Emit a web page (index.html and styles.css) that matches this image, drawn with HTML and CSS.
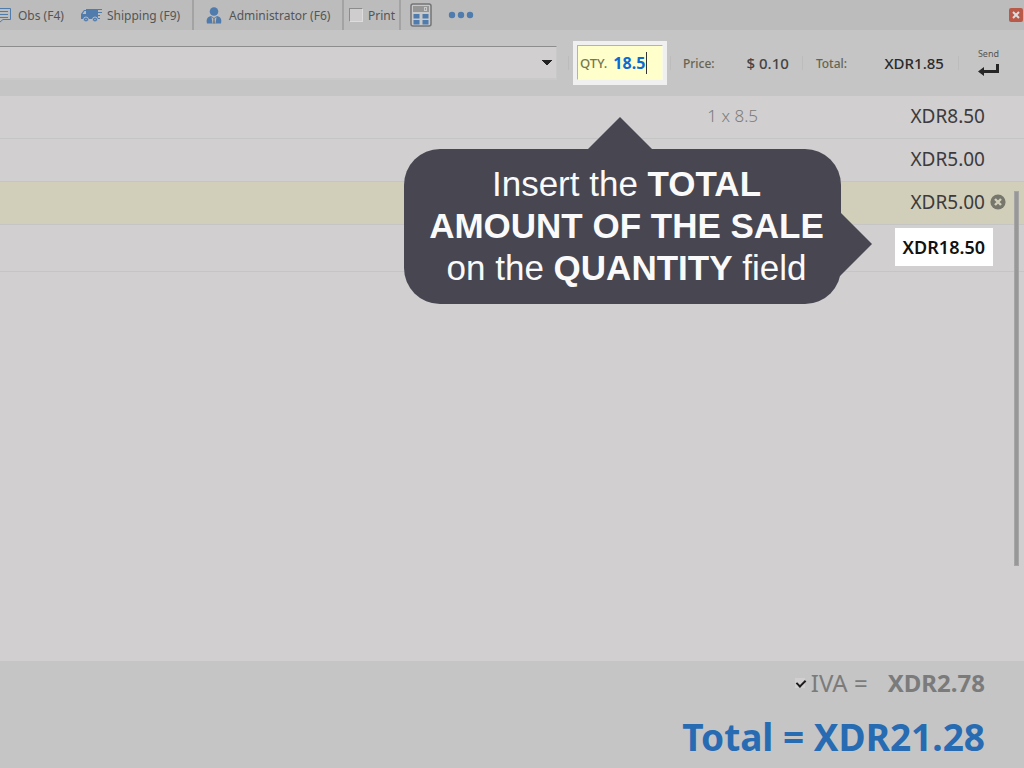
FILE: index.html
```
<!DOCTYPE html>
<html lang="en">
<head>
    <meta charset="UTF-8">
    <meta name="viewport" content="width=device-width, initial-scale=1.0">
    <title>Point of sale</title>
    <link rel="stylesheet" href="styles.css">
</head>
<body>
    <header class="toolbar">
        <button class="tool tool-obs">
            <svg width="12" height="16" viewBox="0 0 12 16" fill="none" stroke="#4f7bad"><path d="M0 1.5h10.5v11H3L0 15M0 4.5h8M0 7.5h8M0 10.5h8"/></svg>
            Obs (F4)
        </button>
        <button class="tool tool-shipping">
            <svg width="21" height="16" viewBox="0 0 21 16" fill="#4f7bad">
                <path d="M5 2h12v9H0V7l3-4h2z"/>
                <path d="M17 2h4v1h-4zM17 5h4v1h-4zM17 8h2v1h-2zM0 11h19v1H0z"/>
                <path d="M1.500 7l2-3H5v3z" fill="#bcbcbc"/>
                <circle cx="5" cy="12.500" r="2.500" stroke="#bcbcbc"/><circle cx="14" cy="12.500" r="2.500" stroke="#bcbcbc"/>
                <circle cx="5" cy="12.500" r=".7" fill="#bcbcbc"/><circle cx="14" cy="12.500" r=".7" fill="#bcbcbc"/>
            </svg>
            Shipping (F9)
        </button>
        <button class="tool tool-user">
            <svg width="16" height="17" viewBox="0 0 16 17" fill="#4f7bad">
                <circle cx="8" cy="4.500" r="4.300"/>
                <path d="M1 16.500c-1-4 0-6.500 4-7.500L8 11l3-2c4 1 5 3.500 4 7.500z"/>
                <path d="M5.500 10l1 6.500h3l1-6.500L8 12z" fill="#bcbcbc"/><path d="M7.500 11h1l.5 5.500H7z" fill="#777"/>
            </svg>
            Administrator (F6)
        </button>
        <label class="tool tool-print"><input type="checkbox" class="print-check">Print</label>
        <button class="tool tool-calc" aria-label="Calculator">
            <svg width="22" height="24" viewBox="0 0 22 24">
                <rect x="1" y="1" width="20" height="22" rx="2" fill="#c8c8c8" stroke="#747474" stroke-width="1.500"/>
                <path d="M3 3h16v6H3z" fill="#969696"/><rect x="14.500" y="4.500" width="2" height="3" fill="none" stroke="#c8c8c8"/>
                <path d="M3.500 11h6v4.500h-6zM12.500 11h6v4.500h-6zM3.500 17h6v4.500h-6zM12.500 17h6v4.500h-6z" fill="#4f7bad"/>
            </svg>
        </button>
        <button class="tool tool-more" aria-label="More">
            <svg width="26" height="8" viewBox="0 0 26 8" fill="#4f7bad"><circle cx="4" cy="4" r="3.200"/><circle cx="13" cy="4" r="3.200"/><circle cx="22" cy="4" r="3.200"/></svg>
        </button>
        <button class="close" aria-label="Close">
            <svg width="8" height="8" viewBox="0 0 8 8" stroke="#ddd" stroke-width="2"><path d="M1 1l6 6M7 1L1 7"/></svg>
        </button>
    </header>

    <section class="entry">
        <select class="product" aria-label="Product"><option></option></select>
        <i class="sep"></i>
        <div class="qty">
            <div class="qty-inner">
                <label for="qty">QTY.</label>
                <div class="qty-value"><input id="qty" type="text" value="18.5"></div>
            </div>
        </div>
        <i class="sep"></i>
        <div class="amount amount-price"><span>Price:</span><b>$ 0.10</b></div>
        <i class="sep"></i>
        <div class="amount amount-total"><span>Total:</span><b>XDR1.85</b></div>
        <i class="sep"></i>
        <button class="send">
            Send
            <svg width="21" height="12" viewBox="0 0 21 12" fill="#262626"><path d="M18 0h3v9H6v3L0 7.500 6 3v3h12z"/></svg>
        </button>
    </section>

    <main class="list">
        <table class="items">
            <tr><td class="detail">1 x 8.5</td><td class="price">XDR8.50</td><td class="action"></td></tr>
            <tr><td class="detail"></td><td class="price">XDR5.00</td><td class="action"></td></tr>
            <tr class="selected">
                <td class="detail"></td><td class="price">XDR5.00</td>
                <td class="action">
                    <button class="remove" aria-label="Remove">
                        <svg width="16" height="16" viewBox="0 0 16 16"><circle cx="8" cy="8" r="7.600" fill="#77766d"/><path d="M5 5l6 6M11 5l-6 6" stroke="#d1cfba" stroke-width="2.400"/></svg>
                    </button>
                </td>
            </tr>
            <tr class="sum"><td class="detail"></td><td class="price"><strong>XDR18.50</strong></td><td class="action"></td></tr>
        </table>
        <div class="scrollbar"></div>
        <div class="callout">
            Insert the <b>TOTAL<br>AMOUNT OF THE SALE</b><br>on the <b>QUANTITY</b> field
        </div>
    </main>

    <footer class="totals">
        <div class="tax">
            <label><input type="checkbox" class="tax-check" checked>IVA =</label>
            <b>XDR2.78</b>
        </div>
        <div class="grand">Total = XDR21.28</div>
    </footer>
</body>
</html>
```
FILE: styles.css
```
* { box-sizing: border-box; }
body {
    margin: 0;
    min-height: 100vh;
    display: flex;
    flex-direction: column;
    font-family: "Noto Sans", "Open Sans", sans-serif;
    background: #d1cfd0;
    color: #3c3a3c;
    overflow: hidden;
}
button { font: inherit; color: inherit; border: 0; padding: 0; background: none; cursor: pointer; }
svg { display: block; flex: none; }

/* toolbar */
.toolbar {
    display: flex;
    height: 30px;
    background: #bcbcbc;
    font-size: 12px;
    color: #555;
}
.tool { display: flex; align-items: center; white-space: nowrap; }
.tool-obs { gap: 6px; width: 81px; }
.tool-shipping { gap: 5px; width: 113px; border-right: 2px solid #a3a3a3; }
.tool-user { gap: 7px; width: 150px; padding-left: 12px; border-right: 2px solid #a3a3a3; }
.tool-print { gap: 5px; width: 57px; padding-left: 5px; border-right: 2px solid #a3a3a3; }
.tool-calc { padding: 0 9px; }
.tool-more { padding: 0 7px; }
.print-check {
    appearance: none;
    width: 14px;
    height: 14px;
    margin: 0;
    background: #cfcdce;
    border: 1px solid #ddd;
    border-top-color: #8c8c8c;
    border-left-color: #8c8c8c;
}
.close {
    display: flex;
    align-items: center;
    justify-content: center;
    align-self: center;
    width: 14px;
    height: 14px;
    margin: 0 1px 0 auto;
    border-radius: 2px;
    background: #b9594a;
}

/* entry bar */
.entry {
    display: flex;
    align-items: center;
    height: 66px;
    background: #c5c5c5;
}
.product {
    appearance: none;
    flex: 1;
    height: 34px;
    border: solid #c9c9c9;
    border-width: 1px 1px 2px 0;
    border-top-color: #8d8d8d;
    border-radius: 0;
    margin-right: 11px;
    background-color: #d1cfd0;
    background-image: linear-gradient(to bottom right, #222 50%, transparent 51%), linear-gradient(to bottom left, #222 50%, transparent 51%);
    background-size: 5px 5px;
    background-position: right 4px center, right 9px center;
    background-repeat: no-repeat;
}
.sep { width: 1px; height: 14px; background: #bcbcbc; }
.qty {
    margin: 0 3px 0 4px;
    padding: 4px;
    width: 94px;
    height: 44px;
    background: #f0f0f0;
}
.qty-inner {
    display: flex;
    align-items: center;
    height: 35px;
    background: #ffffcb;
    border: 1px solid #fafae8;
    border-top-color: #b5b5a0;
    border-left-color: #b5b5a0;
    padding-left: 2px;
    font-size: 13px;
    font-weight: 500;
    color: #77774e;
    gap: 6px;
}
.qty-value { border-right: 1px solid #333; }
.qty-value input {
    display: block;
    width: 33px;
    height: 22px;
    border: 0;
    padding: 0;
    background: none;
    outline: none;
    font: bold 16px "Noto Sans", sans-serif;
    color: #0b6bd3;
}
.amount {
    display: flex;
    align-items: center;
    justify-content: space-between;
    font-size: 12px;
    color: #66644f;
}
.amount span { font-weight: 500; }
.amount b { font-size: 15px; font-weight: 500; color: #444; }
.amount-price { width: 131px; padding: 0 13px 0 12px; }
.amount-total { width: 155px; padding: 0 14px 0 13px; }
.amount-total b { color: #2b2b2b; }
.send {
    display: flex;
    flex-direction: column;
    align-items: center;
    gap: 4px;
    margin: 0 25px 2px 19px;
    font-size: 9px;
    line-height: 12px;
    color: #555;
}

/* list of items */
.list { flex: 1; position: relative; }
.items { width: 100%; border-spacing: 0; }
.items td { height: 43px; padding: 0 0 2px; border-bottom: 1px solid #c6c5c6; line-height: 24px; }
.items .sum td { height: 47px; }
.items .selected { background: #d1cfba; }
.detail { font-size: 17px; font-weight: 300; color: #7c7c7c; text-align: right; }
.price { width: 227px; font-size: 19px; text-align: right; }
.action { width: 39px; }
.remove { display: block; margin-left: 5px; }
.sum strong {
    display: inline-block;
    margin-right: -8px;
    padding: 7px 8px;
    background: #fff;
    color: #111;
    font-size: 18px;
    font-weight: 600;
}
.scrollbar {
    position: absolute;
    right: 5px;
    top: 95px;
    width: 5px;
    height: 375px;
    background: #989898;
    border: 1px solid #a6a6a6;
}

/* callout over the list */
.callout {
    position: absolute;
    top: 53px;
    right: 183px;
    width: 437px;
    padding: 14px 0 15px 8px;
    border-radius: 36px;
    background: #474651;
    color: #fafafa;
    font: 35px/42px "Liberation Sans", Arial, sans-serif;
    text-align: center;
    white-space: nowrap;
}
.callout::before,
.callout::after {
    content: "";
    position: absolute;
    border: 32px solid transparent;
}
.callout::before { left: 184px; bottom: 100%; border-top: 0; border-bottom-color: #474651; }
.callout::after { left: calc(100% - 1px); top: 63px; border-right: 0; border-left-color: #474651; }

/* totals */
.totals {
    height: 107px;
    padding: 5px 39px 0 0;
    background: #c5c5c5;
    text-align: right;
}
.tax {
    display: flex;
    justify-content: flex-end;
    gap: 20px;
    font-size: 24px;
    line-height: 34px;
    color: #7b7b7b;
}
.tax label { display: flex; align-items: center; gap: 6px; }
.tax b { font-weight: 700; }
.tax-check {
    appearance: none;
    width: 10px;
    height: 10px;
    margin: 0;
    background: #d1cfd0;
}
.tax-check::before {
    content: "";
    display: block;
    width: 4px;
    height: 7px;
    margin: 0 0 0 3px;
    border: solid #1c1c1c;
    border-width: 0 2px 2px 0;
    transform: rotate(45deg);
}
.grand {
    font-size: 37px;
    font-weight: 700;
    line-height: 52px;
    margin-top: 11px;
    color: #276bb3;
}
```
